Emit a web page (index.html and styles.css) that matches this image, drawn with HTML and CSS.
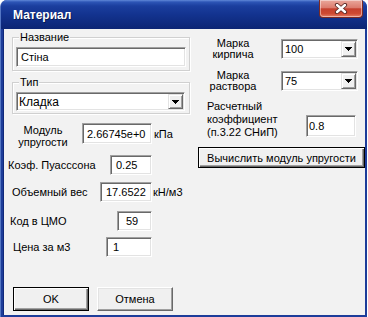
FILE: index.html
```html
<!DOCTYPE html>
<html lang="ru">
<head>
    <meta charset="UTF-8">
    <meta name="viewport" content="width=device-width, initial-scale=1.0">
    <title>Материал</title>
    <link rel="stylesheet" href="styles.css">
</head>
<body>
    <div class="window">
        <div class="titlebar">
            <span class="title">Материал</span>
            <div class="close-btn">
                <svg width="14" height="11" viewBox="0 0 14 11">
                    <path d="M3 2L11 9M11 2L3 9" stroke="#5a2a26" stroke-width="4.2" stroke-linecap="round"/>
                    <path d="M3 2L11 9M11 2L3 9" stroke="#ffffff" stroke-width="2.4" stroke-linecap="round"/>
                </svg>
            </div>
        </div>
        <div class="client">
            <div class="columns">
                <div class="left-col">
                    <div class="group group-name">
                        <span class="group-caption">Название</span>
                        <div class="edit edit-name">Стіна</div>
                    </div>
                    <div class="group group-type">
                        <span class="group-caption">Тип</span>
                        <div class="combo combo-type">
                            <span class="combo-text">Кладка</span>
                            <span class="combo-btn"><svg width="7" height="4" viewBox="0 0 7 4"><path d="M0 0H7L3.5 4Z" fill="#000"/></svg></span>
                        </div>
                    </div>
                    <div class="field-row row-modulus">
                        <span class="field-label label-modulus">Модуль<br>упругости</span>
                        <div class="edit edit-modulus">2.66745e+0</div>
                        <span class="unit">кПа</span>
                    </div>
                    <div class="field-row row-poisson">
                        <span class="field-label label-poisson">Коэф. Пуасссона</span>
                        <div class="edit edit-poisson">0.25</div>
                    </div>
                    <div class="field-row row-weight">
                        <span class="field-label label-weight">Объемный вес</span>
                        <div class="edit edit-weight">17.6522</div>
                        <span class="unit unit-weight">кН/м3</span>
                    </div>
                    <div class="field-row row-code">
                        <span class="field-label label-code">Код в ЦМО</span>
                        <div class="edit edit-code">59</div>
                    </div>
                    <div class="field-row row-price">
                        <span class="field-label label-price">Цена за м3</span>
                        <div class="edit edit-price">1</div>
                    </div>
                </div>
                <div class="right-col">
                    <div class="field-row row-brick">
                        <span class="side-label">Марка<br>кирпича</span>
                        <div class="combo combo-grade">
                            <span class="combo-text">100</span>
                            <span class="combo-btn"><svg width="7" height="4" viewBox="0 0 7 4"><path d="M0 0H7L3.5 4Z" fill="#000"/></svg></span>
                        </div>
                    </div>
                    <div class="field-row row-mortar">
                        <span class="side-label">Марка<br>раствора</span>
                        <div class="combo combo-grade">
                            <span class="combo-text">75</span>
                            <span class="combo-btn"><svg width="7" height="4" viewBox="0 0 7 4"><path d="M0 0H7L3.5 4Z" fill="#000"/></svg></span>
                        </div>
                    </div>
                    <div class="field-row row-coef">
                        <span class="coef-label">Расчетный<br>коэффициент<br>(п.3.22 СНиП)</span>
                        <div class="edit edit-coef">0.8</div>
                    </div>
                    <button class="btn btn-default btn-calc">Вычислить модуль упругости</button>
                </div>
            </div>
            <div class="dialog-buttons">
                <button class="btn btn-default">OK</button>
                <button class="btn">Отмена</button>
            </div>
        </div>
    </div>
</body>
</html>
```

FILE: styles.css
```css
* {
    box-sizing: border-box;
}
body {
    margin: 0;
    background: #ffffff;
    font-family: "Liberation Sans", Arial, sans-serif;
    font-size: 11px;
    color: #000;
}
.window {
    width: 367px;
    height: 317px;
    display: flex;
    flex-direction: column;
    background: #1d3d9a;
    border-left: 1px solid #5577c4;
    border-radius: 7px 7px 0 0;
    overflow: hidden;
}
.titlebar {
    height: 29px;
    flex-shrink: 0;
    display: flex;
    align-items: flex-start;
    background: linear-gradient(#6088d8 0, #2d55b6 2px, #1b3e9e 6px, #13338f 50%, #0c2574 100%);
}
.title {
    color: #fff;
    font-weight: bold;
    font-size: 12px;
    line-height: 14px;
    padding-left: 12px;
    margin-top: 8px;
    text-shadow: 1px 1px 0 #0a1a50;
}
.close-btn {
    margin-left: auto;
    margin-right: 4px;
    width: 44px;
    height: 18px;
    border: 1px solid #7c2a24;
    border-top: none;
    border-radius: 0 0 4px 4px;
    background: linear-gradient(#eaa89c 0, #dc7c6e 45%, #c5402e 52%, #cf4a32 80%, #e6806a 100%);
    box-shadow: inset 0 0 0 1px rgba(255, 255, 255, 0.45);
    display: flex;
    align-items: center;
    justify-content: center;
}
.client {
    flex: 1;
    margin: 0 2px 2px 3px;
    background: #f2f2f2;
    box-shadow: -1px 0 0 #10297a;
    display: flex;
    flex-direction: column;
}
.columns {
    display: flex;
}
.left-col {
    width: 194px;
    flex-shrink: 0;
    padding-top: 8px;
}
.right-col {
    width: 167px;
    flex-shrink: 0;
}

/* group boxes */
.group {
    position: relative;
    margin-left: 8px;
    width: 178px;
    border: 1px solid #d0d0d0;
    box-shadow: inset 1px 1px 0 #fff, 1px 1px 0 #fff;
    padding: 9px 0 0 3px;
}
.group-name {
    height: 34px;
}
.group-type {
    margin-top: 11px;
    height: 32px;
}
.group-caption {
    position: absolute;
    top: -7px;
    left: 6px;
    padding: 0 1px;
    line-height: 13px;
    background: #f2f2f2;
}

/* edits and combos */
.edit {
    display: flex;
    align-items: center;
    background: #fff;
    border: 1px solid;
    border-color: #a0a0a0 #fff #fff #a0a0a0;
    box-shadow: inset 1px 1px 0 #696969, inset -1px -1px 0 #e3e3e3;
    padding-left: 4px;
    height: 20px;
    flex-shrink: 0;
}
.edit-name {
    width: 170px;
}
.combo {
    display: flex;
    background: #fff;
    border: 1px solid;
    border-color: #a0a0a0 #fff #fff #a0a0a0;
    box-shadow: inset 1px 1px 0 #696969, inset -1px -1px 0 #e3e3e3;
    padding: 1px;
    flex-shrink: 0;
}
.combo-text {
    flex: 1;
    display: flex;
    align-items: center;
    padding-left: 2px;
}
.combo-btn {
    width: 15px;
    display: flex;
    align-items: center;
    justify-content: center;
    background: #f0f0f0;
    border: 1px solid;
    border-color: #e3e3e3 #696969 #696969 #e3e3e3;
    box-shadow: inset 1px 1px 0 #fff, inset -1px -1px 0 #a0a0a0;
}
.combo-btn svg {
    shape-rendering: crispEdges;
}
.combo-type {
    width: 169px;
    height: 19px;
    font-size: 12px;
}
.combo-type .combo-text {
    padding-left: 1px;
}
.combo-grade {
    width: 77px;
    height: 20px;
    margin-left: 13px;
}

/* label + value rows */
.field-row {
    display: flex;
    align-items: center;
}
.field-label {
    flex-shrink: 0;
}
.unit {
    margin-left: 2px;
}
.unit-weight {
    margin-left: 1px;
}
.row-modulus {
    margin-top: 9px;
    height: 21px;
}
.label-modulus {
    width: 78px;
    text-align: center;
    line-height: 12px;
    margin-top: 5px;
}
.edit-modulus {
    width: 70px;
    height: 21px;
}
.row-poisson {
    margin-top: 11px;
}
.label-poisson {
    width: 106px;
    padding-left: 4px;
}
.edit-poisson {
    width: 42px;
    padding-left: 5px;
}
.row-weight {
    margin-top: 7px;
}
.label-weight {
    width: 96px;
    padding-left: 8px;
}
.edit-weight {
    width: 52px;
    padding-left: 5px;
}
.row-code {
    margin-top: 9px;
}
.label-code {
    width: 113px;
    padding-left: 6px;
}
.edit-code {
    width: 35px;
    padding-left: 8px;
}
.row-price {
    margin-top: 6px;
}
.label-price {
    width: 102px;
    padding-left: 9px;
}
.edit-price {
    width: 46px;
    padding-left: 6px;
}

/* right column */
.side-label {
    width: 70px;
    text-align: center;
    line-height: 11px;
    flex-shrink: 0;
}
.row-brick {
    margin-top: 9px;
}
.row-mortar {
    margin-top: 10px;
}
.row-coef {
    margin-top: 8px;
    align-items: flex-end;
}
.coef-label {
    width: 108px;
    padding-left: 9px;
    line-height: 13px;
    flex-shrink: 0;
}
.edit-coef {
    width: 50px;
    height: 22px;
    padding-left: 2px;
    margin-bottom: 2px;
}

/* buttons */
.btn {
    font-family: "Liberation Sans", Arial, sans-serif;
    font-size: 11px;
    color: #000;
    width: 76px;
    height: 24px;
    padding: 0;
    background: #f0f0f0;
    border: 1px solid;
    border-color: #fff #696969 #696969 #fff;
    box-shadow: inset -1px -1px 0 #a0a0a0, inset 1px 1px 0 #e3e3e3;
}
.btn-default {
    border-color: #000;
    box-shadow: inset 1px 1px 0 #fff, inset -1px -1px 0 #696969, inset -2px -2px 0 #a0a0a0;
}
.btn-calc {
    display: block;
    width: 167px;
    height: 21px;
    margin-top: 8px;
}
.dialog-buttons {
    display: flex;
    gap: 8px;
    margin: 30px 0 0 9px;
}
```
